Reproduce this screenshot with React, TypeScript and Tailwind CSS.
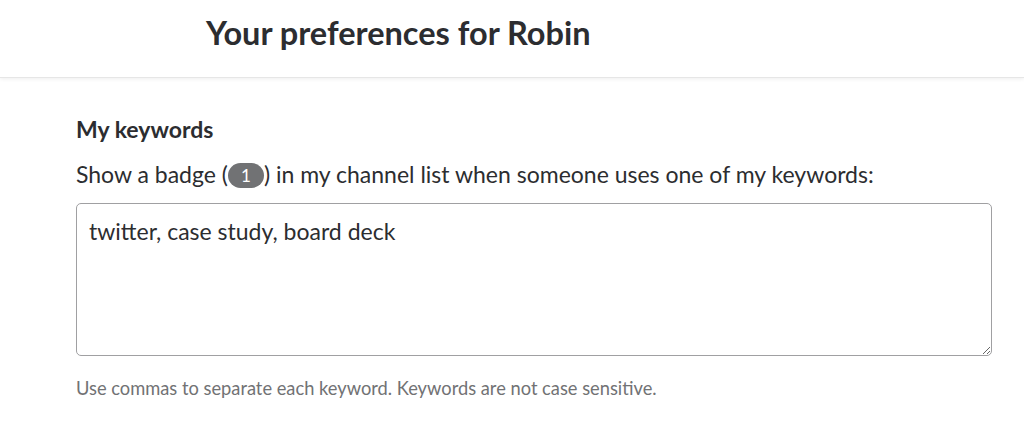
export default function App() {
  return (
    <div className="min-h-screen bg-white text-[#2c2d30]" style={{ fontFamily: "Lato, 'Noto Sans', sans-serif" }}>
      <header className="h-[78px] border-b border-[#e6e6e6] pl-[206px] pt-[13px] shadow-[0_1px_4px_rgba(0,0,0,0.07)]">
        <h1 className="text-[32.5px] font-bold leading-[40px] text-[#2c2d30]">Your preferences for Robin</h1>
      </header>

      <main className="pl-[76px] pr-[32px] pt-[37px]">
        <h2 className="text-[23px] font-bold leading-[28px]">My keywords</h2>
        <p className="mt-[16px] text-[23px] leading-[30px]">
          Show a badge (
          <span className="inline-block h-[25px] w-[36px] rounded-full bg-[#717274] text-center align-[1px] text-[17px] leading-[25px] text-white">
            1
          </span>
          ) in my channel list when someone uses one of my keywords:
        </p>
        <textarea
          className="mt-[14px] block h-[153px] w-full resize-y rounded-[5px] border border-[#a0a0a2] px-[12px] pt-[12px] text-[23px] leading-[30px] text-[#2c2d30] outline-none"
          defaultValue="twitter, case study, board deck"
        />
        <p className="mt-[20px] text-[18.3px] leading-[24px] text-[#717274]">
          Use commas to separate each keyword. Keywords are not case sensitive.
        </p>
      </main>
    </div>
  );
}
